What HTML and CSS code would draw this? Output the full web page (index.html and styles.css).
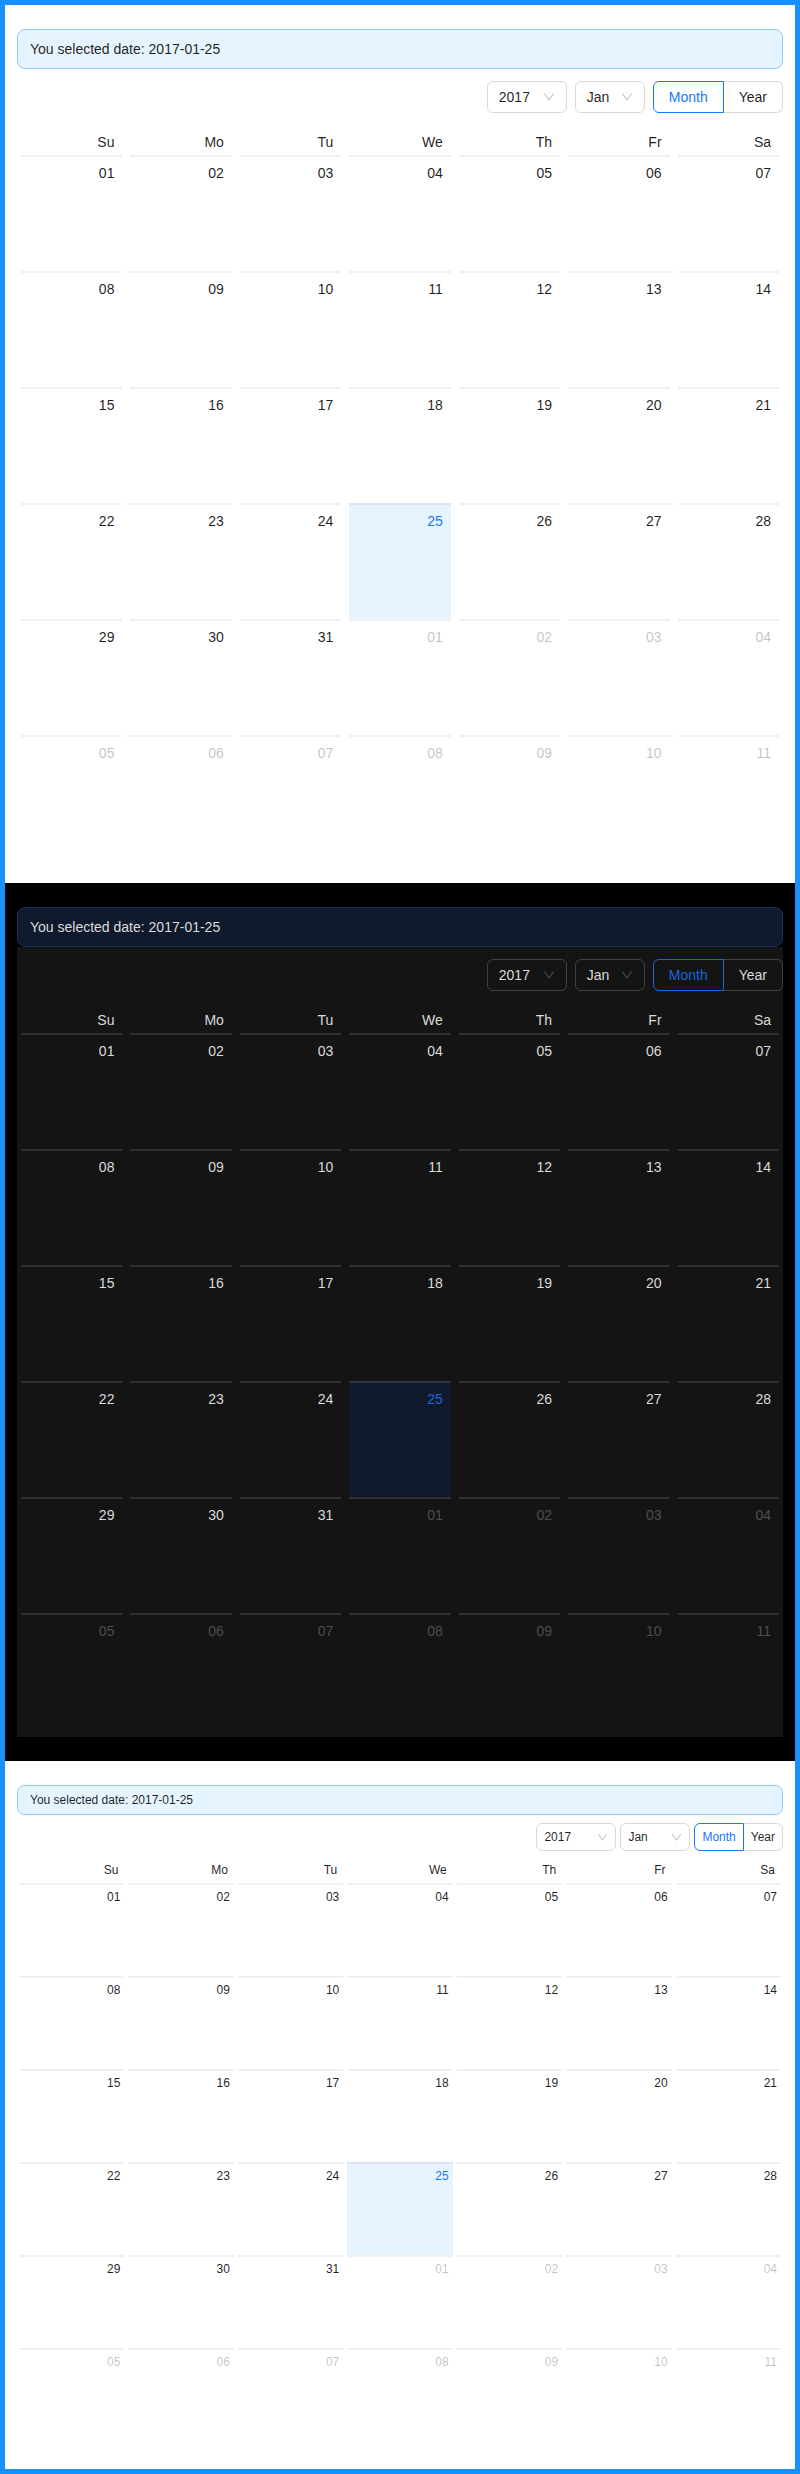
FILE: index.html
```html
<!DOCTYPE html>
<html lang="en">
<head>
<meta charset="utf-8">
<title>Calendar</title>
<link rel="stylesheet" href="styles.css">
</head>
<body>
<div class="frame">

<section class="section light">
  <div class="alert">You selected date: 2017-01-25</div>
  <div class="cal">
    <div class="cal-header">
      <div class="select year-select"><span>2017</span><svg class="arrow" viewBox="64 64 896 896"><path d="M884 256h-75c-5.1 0-9.9 2.5-12.9 6.6L512 654.2 227.9 262.6c-3-4.1-7.8-6.6-12.9-6.6h-75c-6.5 0-10.3 7.4-6.5 12.7l352.6 486.1c12.8 17.6 39 17.6 51.7 0l352.6-486.1c3.9-5.3.1-12.7-6.4-12.7z"/></svg></div>
      <div class="select month-select"><span>Jan</span><svg class="arrow" viewBox="64 64 896 896"><path d="M884 256h-75c-5.1 0-9.9 2.5-12.9 6.6L512 654.2 227.9 262.6c-3-4.1-7.8-6.6-12.9-6.6h-75c-6.5 0-10.3 7.4-6.5 12.7l352.6 486.1c12.8 17.6 39 17.6 51.7 0l352.6-486.1c3.9-5.3.1-12.7-6.4-12.7z"/></svg></div>
      <div class="seg"><span class="btn on">Month</span><span class="btn">Year</span></div>
    </div>
    <div class="grid">
      <div class="wk">Su</div><div class="wk">Mo</div><div class="wk">Tu</div><div class="wk">We</div><div class="wk">Th</div><div class="wk">Fr</div><div class="wk">Sa</div>
      <div class="d">01</div><div class="d">02</div><div class="d">03</div><div class="d">04</div><div class="d">05</div><div class="d">06</div><div class="d">07</div>
      <div class="d">08</div><div class="d">09</div><div class="d">10</div><div class="d">11</div><div class="d">12</div><div class="d">13</div><div class="d">14</div>
      <div class="d">15</div><div class="d">16</div><div class="d">17</div><div class="d">18</div><div class="d">19</div><div class="d">20</div><div class="d">21</div>
      <div class="d">22</div><div class="d">23</div><div class="d">24</div><div class="d sel">25</div><div class="d">26</div><div class="d">27</div><div class="d">28</div>
      <div class="d">29</div><div class="d">30</div><div class="d">31</div><div class="d o">01</div><div class="d o">02</div><div class="d o">03</div><div class="d o">04</div>
      <div class="d o">05</div><div class="d o">06</div><div class="d o">07</div><div class="d o">08</div><div class="d o">09</div><div class="d o">10</div><div class="d o">11</div>
    </div>
  </div>
</section>

<section class="section dark">
  <div class="alert">You selected date: 2017-01-25</div>
  <div class="cal">
    <div class="cal-header">
      <div class="select year-select"><span>2017</span><svg class="arrow" viewBox="64 64 896 896"><path d="M884 256h-75c-5.1 0-9.9 2.5-12.9 6.6L512 654.2 227.9 262.6c-3-4.1-7.8-6.6-12.9-6.6h-75c-6.5 0-10.3 7.4-6.5 12.7l352.6 486.1c12.8 17.6 39 17.6 51.7 0l352.6-486.1c3.9-5.3.1-12.7-6.4-12.7z"/></svg></div>
      <div class="select month-select"><span>Jan</span><svg class="arrow" viewBox="64 64 896 896"><path d="M884 256h-75c-5.1 0-9.9 2.5-12.9 6.6L512 654.2 227.9 262.6c-3-4.1-7.8-6.6-12.9-6.6h-75c-6.5 0-10.3 7.4-6.5 12.7l352.6 486.1c12.8 17.6 39 17.6 51.7 0l352.6-486.1c3.9-5.3.1-12.7-6.4-12.7z"/></svg></div>
      <div class="seg"><span class="btn on">Month</span><span class="btn">Year</span></div>
    </div>
    <div class="grid">
      <div class="wk">Su</div><div class="wk">Mo</div><div class="wk">Tu</div><div class="wk">We</div><div class="wk">Th</div><div class="wk">Fr</div><div class="wk">Sa</div>
      <div class="d">01</div><div class="d">02</div><div class="d">03</div><div class="d">04</div><div class="d">05</div><div class="d">06</div><div class="d">07</div>
      <div class="d">08</div><div class="d">09</div><div class="d">10</div><div class="d">11</div><div class="d">12</div><div class="d">13</div><div class="d">14</div>
      <div class="d">15</div><div class="d">16</div><div class="d">17</div><div class="d">18</div><div class="d">19</div><div class="d">20</div><div class="d">21</div>
      <div class="d">22</div><div class="d">23</div><div class="d">24</div><div class="d sel">25</div><div class="d">26</div><div class="d">27</div><div class="d">28</div>
      <div class="d">29</div><div class="d">30</div><div class="d">31</div><div class="d o">01</div><div class="d o">02</div><div class="d o">03</div><div class="d o">04</div>
      <div class="d o">05</div><div class="d o">06</div><div class="d o">07</div><div class="d o">08</div><div class="d o">09</div><div class="d o">10</div><div class="d o">11</div>
    </div>
  </div>
</section>

<section class="section light compact">
  <div class="alert">You selected date: 2017-01-25</div>
  <div class="cal">
    <div class="cal-header">
      <div class="select year-select"><span>2017</span><svg class="arrow" viewBox="64 64 896 896"><path d="M884 256h-75c-5.1 0-9.9 2.5-12.9 6.6L512 654.2 227.9 262.6c-3-4.1-7.8-6.6-12.9-6.6h-75c-6.5 0-10.3 7.4-6.5 12.7l352.6 486.1c12.8 17.6 39 17.6 51.7 0l352.6-486.1c3.9-5.3.1-12.7-6.4-12.7z"/></svg></div>
      <div class="select month-select"><span>Jan</span><svg class="arrow" viewBox="64 64 896 896"><path d="M884 256h-75c-5.1 0-9.9 2.5-12.9 6.6L512 654.2 227.9 262.6c-3-4.1-7.8-6.6-12.9-6.6h-75c-6.5 0-10.3 7.4-6.5 12.7l352.6 486.1c12.8 17.6 39 17.6 51.7 0l352.6-486.1c3.9-5.3.1-12.7-6.4-12.7z"/></svg></div>
      <div class="seg"><span class="btn on">Month</span><span class="btn">Year</span></div>
    </div>
    <div class="grid">
      <div class="wk">Su</div><div class="wk">Mo</div><div class="wk">Tu</div><div class="wk">We</div><div class="wk">Th</div><div class="wk">Fr</div><div class="wk">Sa</div>
      <div class="d">01</div><div class="d">02</div><div class="d">03</div><div class="d">04</div><div class="d">05</div><div class="d">06</div><div class="d">07</div>
      <div class="d">08</div><div class="d">09</div><div class="d">10</div><div class="d">11</div><div class="d">12</div><div class="d">13</div><div class="d">14</div>
      <div class="d">15</div><div class="d">16</div><div class="d">17</div><div class="d">18</div><div class="d">19</div><div class="d">20</div><div class="d">21</div>
      <div class="d">22</div><div class="d">23</div><div class="d">24</div><div class="d sel">25</div><div class="d">26</div><div class="d">27</div><div class="d">28</div>
      <div class="d">29</div><div class="d">30</div><div class="d">31</div><div class="d o">01</div><div class="d o">02</div><div class="d o">03</div><div class="d o">04</div>
      <div class="d o">05</div><div class="d o">06</div><div class="d o">07</div><div class="d o">08</div><div class="d o">09</div><div class="d o">10</div><div class="d o">11</div>
    </div>
  </div>
</section>

</div>
</body>
</html>
```

FILE: styles.css
```css
* { box-sizing: border-box; }
html, body { margin: 0; padding: 0; }
body {
  font-family: "Liberation Sans", Arial, sans-serif;
  background: #fff;
}

.frame {
  border: 5px solid #1890ff;
}

/* theme tokens */
.section {
  --bg: #ffffff;
  --panel: #ffffff;
  --text: rgba(0, 0, 0, 0.88);
  --muted: rgba(0, 0, 0, 0.25);
  --split: rgba(5, 5, 5, 0.06);
  --border: #d9d9d9;
  --primary: #1677ff;
  --active: #e6f4ff;
  --alert-bg: #e6f4ff;
  --alert-border: #91caff;
  --arrow-c: rgba(0, 0, 0, 0.25);

  --fs: 14px;
  --alert-lh: 22px;
  --alert-pv: 8px;
  --hdr-pad: 12px;
  --ctl-h: 32px;
  --ctl-pad: 11px;
  --gap: 8px;
  --btn-pad: 15px;
  --body-pad: 8px;
  --th-pr: 12px;
  --th-pb: 4px;
  --th-lh: 18px;
  --cell-m: 4px;
  --cell-pt: 4px;
  --cell-px: 8px;
  --val-lh: 24px;
  --cell-h: 116px;
  --arrow: 12px;

  padding: 24px 12px;
  background: var(--bg);
  color: var(--text);
  font-size: var(--fs);
}

.section.dark {
  --bg: #000000;
  --panel: #141414;
  --text: rgba(255, 255, 255, 0.85);
  --muted: rgba(255, 255, 255, 0.25);
  --split: rgba(253, 253, 253, 0.12);
  --border: #424242;
  --primary: #1668dc;
  --active: #111a2c;
  --alert-bg: #111a2c;
  --alert-border: #15325b;
  --arrow-c: rgba(255, 255, 255, 0.25);
}

.section.compact {
  --fs: 12px;
  --alert-lh: 20px;
  --alert-pv: 4px;
  --hdr-pad: 8px;
  --ctl-h: 28px;
  --ctl-pad: 7px;
  --gap: 4px;
  --btn-pad: 7px;
  --body-pad: 4px;
  --th-pr: 8px;
  --th-pb: 4px;
  --th-lh: 15.75px;
  --cell-m: 2px;
  --cell-pt: 2px;
  --cell-px: 4px;
  --val-lh: 21px;
  --cell-h: 93px;
  --arrow: 11px;
}

.alert {
  background: var(--alert-bg);
  border: 1px solid var(--alert-border);
  border-radius: 8px;
  padding: var(--alert-pv) 12px;
  line-height: var(--alert-lh);
  font-size: var(--fs);
  color: var(--text);
}

.cal {
  background: var(--panel);
}

.cal-header {
  display: flex;
  justify-content: flex-end;
  padding: var(--hdr-pad) 0;
}

.select {
  display: flex;
  align-items: center;
  justify-content: space-between;
  height: var(--ctl-h);
  padding: 0 var(--ctl-pad);
  border: 1px solid var(--border);
  border-radius: 6px;
  background: var(--panel);
  color: var(--text);
}
.year-select { width: 80px; }
.month-select { width: 70px; margin-left: var(--gap); }

.arrow {
  width: var(--arrow);
  height: var(--arrow);
  fill: var(--arrow-c);
  flex: none;
}

.seg {
  display: flex;
  margin-left: var(--gap);
}
.btn {
  display: block;
  height: var(--ctl-h);
  line-height: calc(var(--ctl-h) - 2px);
  padding: 0 var(--btn-pad);
  border: 1px solid var(--border);
  background: var(--panel);
  color: var(--text);
}
.btn:first-child { border-radius: 6px 0 0 6px; }
.btn:last-child { border-radius: 0 6px 6px 0; border-left: 0; }
.btn.on {
  border-color: var(--primary);
  color: var(--primary);
}

.grid {
  display: grid;
  grid-template-columns: repeat(7, 1fr);
  padding: var(--body-pad) 0;
}

.wk {
  text-align: right;
  padding: 0 var(--th-pr) var(--th-pb) 0;
  line-height: var(--th-lh);
}

.d {
  margin: 0 var(--cell-m);
  padding: var(--cell-pt) var(--cell-px) 0;
  border-top: 2px solid var(--split);
  height: var(--cell-h);
  line-height: var(--val-lh);
  text-align: right;
  color: var(--text);
}
.d.o { color: var(--muted); }
.d.sel {
  background: var(--active);
  color: var(--primary);
}
```
